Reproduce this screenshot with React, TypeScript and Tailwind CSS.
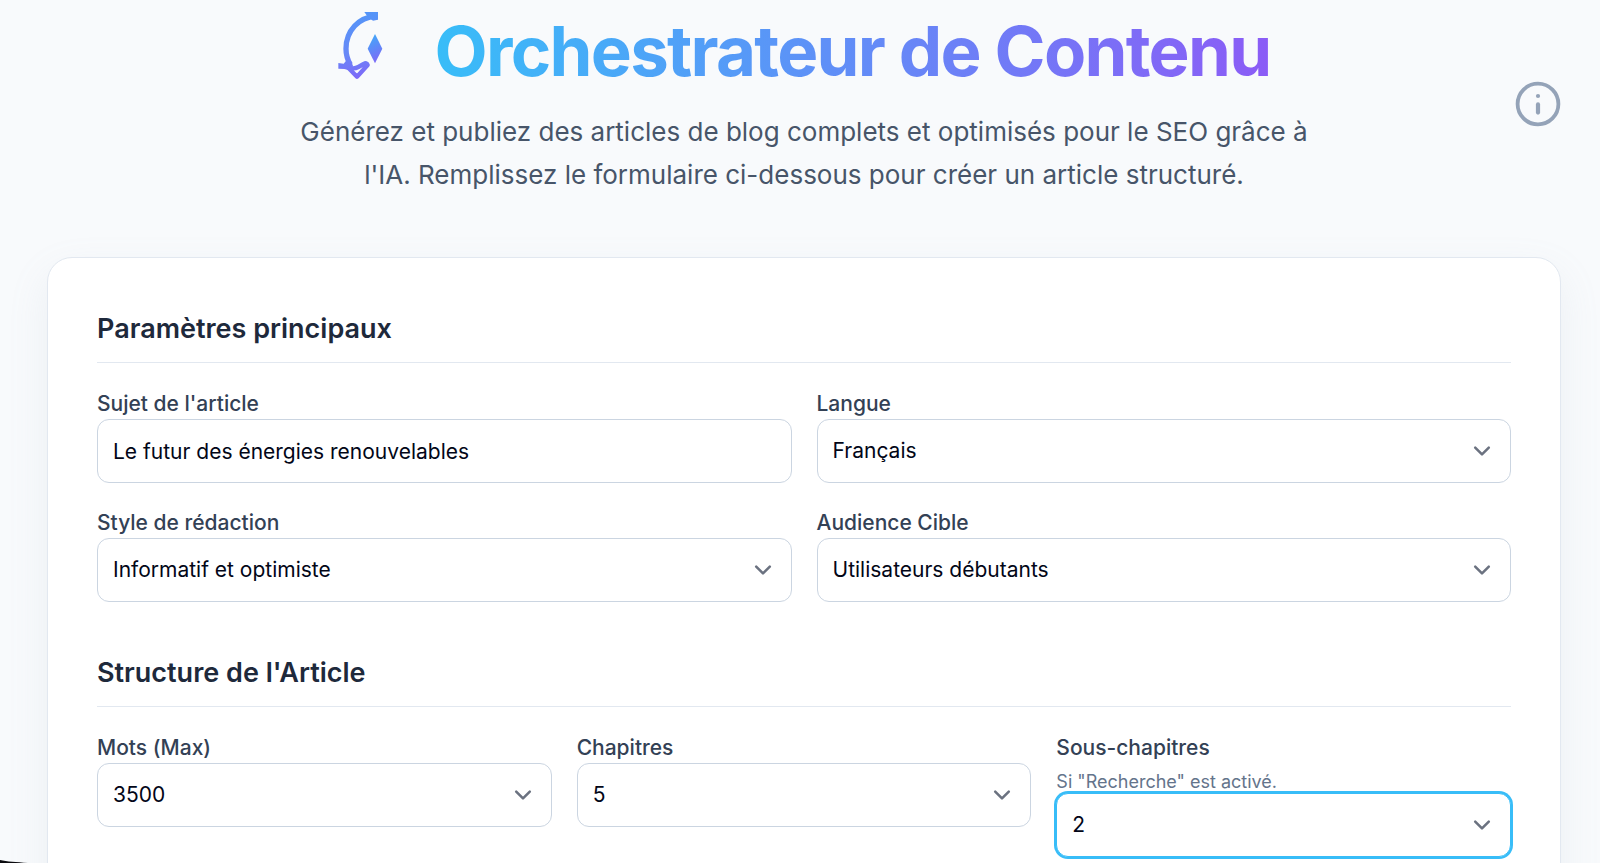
import type { ReactNode } from "react";

const controlBase =
  "block h-16 w-full rounded-xl border bg-white px-[15px] text-[21px] leading-8 text-[#020617] outline-none";
const controlIdle = "border-[#cbd5e1]";
const controlActive = "border-[#38bdf8] ring-2 ring-[#38bdf8]";

function Logo() {
  return (
    <svg viewBox="45 33 135 207" className="h-[69px] w-[45px] shrink-0 self-start" fill="none" aria-hidden="true">
      <defs>
        <linearGradient id="logo-arc" x1="80" y1="36" x2="120" y2="238" gradientUnits="userSpaceOnUse">
          <stop offset="0" stopColor="#5296f8" />
          <stop offset="0.6" stopColor="#6888f7" />
          <stop offset="1" stopColor="#7f66f8" />
        </linearGradient>
        <linearGradient id="logo-gem" x1="138" y1="115" x2="172" y2="180" gradientUnits="userSpaceOnUse">
          <stop offset="0" stopColor="#46a4f9" />
          <stop offset="1" stopColor="#7c6af7" />
        </linearGradient>
      </defs>
      <path d="M124 36H165V59L150 62L134 50Z" fill="url(#logo-arc)" />
      <path d="M158 49C108 51 69 92 69 146C69 163 73 178 82 194" stroke="url(#logo-arc)" strokeWidth="16" />
      <path d="M46 189L62 191L68 184L84 184L90 197L84 212L64 207L46 206Z" fill="url(#logo-arc)" />
      <path
        d="M76 203L102 230L134 195Q131 186 122 192L106 201Q94 208 76 203Z"
        stroke="url(#logo-arc)"
        strokeWidth="13"
        strokeLinejoin="round"
      />
      <path d="M156 102L178 146L156 190L134 146Z" fill="url(#logo-gem)" />
    </svg>
  );
}

function InfoIcon() {
  return (
    <svg viewBox="0 0 46 46" className="size-[46px]" fill="none" stroke="currentColor" aria-hidden="true">
      <circle cx="23" cy="23" r="20.4" strokeWidth="3.8" />
      <path d="M23 23.4V31.6" strokeWidth="4.2" strokeLinecap="round" />
      <circle cx="23" cy="15" r="2.1" fill="currentColor" stroke="none" />
    </svg>
  );
}

function Field({ id, label, hint, children }: { id: string; label: string; hint?: string; children: ReactNode }) {
  return (
    <div>
      <label htmlFor={id} className="block text-[21px] leading-[31px] font-medium text-[#334155]">
        {label}
      </label>
      {hint && (
        <p id={`${id}-hint`} className="mt-2 text-[18px] leading-[22px] text-[#64748b]">
          {hint}
        </p>
      )}
      {children}
    </div>
  );
}

function SelectField({
  id,
  label,
  value,
  hint,
  active,
}: {
  id: string;
  label: string;
  value: string;
  hint?: string;
  active?: boolean;
}) {
  return (
    <Field id={id} label={label} hint={hint}>
      <div className="relative">
        <select
          id={id}
          defaultValue={value}
          aria-describedby={hint ? `${id}-hint` : undefined}
          className={`${controlBase} appearance-none ${active ? controlActive : controlIdle}`}
        >
          <option>{value}</option>
        </select>
        <svg
          viewBox="0 0 20 20"
          className="pointer-events-none absolute inset-y-0 right-3 my-auto size-[34px] text-[#6b7280]"
          fill="none"
          stroke="currentColor"
          strokeWidth="1.5"
          strokeLinecap="round"
          strokeLinejoin="round"
          aria-hidden="true"
        >
          <path d="M6 8l4 4 4-4" />
        </svg>
      </div>
    </Field>
  );
}

function Section({ title, children }: { title: string; children: ReactNode }) {
  return (
    <section>
      <h2 className="mb-[25px] border-b border-[#e2e8f0] pb-[11px] text-[27px] leading-[44px] font-semibold text-[#1e293b]">
        {title}
      </h2>
      {children}
    </section>
  );
}

export default function App() {
  return (
    <div className="h-screen overflow-hidden bg-[#f8fafc] font-['Inter',sans-serif]">
      <div className="pr-[39px] pl-[47px]">
        <header className="grid grid-cols-[46px_1fr_46px] items-center pt-[11px] pb-[61px]">
          <div className="col-start-2 flex flex-col items-center">
            <div className="flex items-center gap-[52px]">
              <Logo />
              <h1 className="bg-linear-to-r/srgb from-[#38bdf8] to-[#8b5cf6] bg-clip-text text-[69px] leading-[80px] font-bold tracking-tight whitespace-nowrap text-transparent">
                Orchestrateur de Contenu
              </h1>
            </div>
            <p className="mt-[19px] max-w-[1040px] text-center text-[26px] leading-[43px] text-[#475569]">
              Générez et publiez des articles de blog complets et optimisés pour le SEO grâce à l'IA. Remplissez le
              formulaire ci-dessous pour créer un article structuré.
            </p>
          </div>
          <button type="button" aria-label="Informations" className="text-[#94a3b8]">
            <InfoIcon />
          </button>
        </header>

        <main>
          <form className="flex flex-col gap-[49px] rounded-[25px] border border-[#e2e8f0] bg-white p-[49px] shadow-[0_16px_40px_rgba(148,163,184,0.12)]">
            <Section title="Paramètres principaux">
              <div className="grid grid-cols-2 gap-x-[25px] gap-y-6">
                <Field id="sujet" label="Sujet de l'article">
                  <input
                    id="sujet"
                    type="text"
                    defaultValue="Le futur des énergies renouvelables"
                    className={`${controlBase} ${controlIdle}`}
                  />
                </Field>
                <SelectField id="langue" label="Langue" value="Français" />
                <SelectField id="style" label="Style de rédaction" value="Informatif et optimiste" />
                <SelectField id="audience" label="Audience Cible" value="Utilisateurs débutants" />
              </div>
            </Section>
            <Section title="Structure de l'Article">
              <div className="grid grid-cols-3 gap-[25px]">
                <SelectField id="mots" label="Mots (Max)" value="3500" />
                <SelectField id="chapitres" label="Chapitres" value="5" />
                <SelectField
                  id="sous-chapitres"
                  label="Sous-chapitres"
                  value="2"
                  hint={'Si "Recherche" est activé.'}
                  active
                />
              </div>
            </Section>
          </form>
        </main>
      </div>
      <svg viewBox="0 0 28 3" className="fixed bottom-0 left-0 h-[3px] w-7" aria-hidden="true">
        <path d="M0 0C7 1.6 16 2 28 3H0Z" fill="#0b0b0f" />
      </svg>
    </div>
  );
}
